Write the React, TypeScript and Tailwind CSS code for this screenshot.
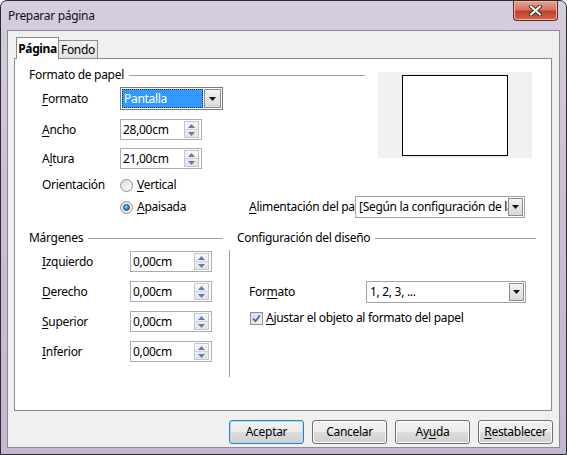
import React from 'react';

const U = ({ children }: { children: React.ReactNode }) => (
  <span className="underline decoration-1 underline-offset-[2px]">{children}</span>
);

function Spin() {
  return (
    <div className="mr-[2px] flex h-[17px] w-[15px] flex-col border border-[#c6c6c6] bg-gradient-to-b from-[#f7f7f7] to-[#e3e3e3]">
      <div className="flex flex-1 items-center justify-center border-b border-[#d2d2d2]">
        <svg width="7" height="4" viewBox="0 0 7 4">
          <path d="M0 4L3.5 0L7 4Z" fill="#5b7db8" />
        </svg>
      </div>
      <div className="flex flex-1 items-center justify-center">
        <svg width="7" height="4" viewBox="0 0 7 4">
          <path d="M0 0L3.5 4L7 0Z" fill="#5b7db8" />
        </svg>
      </div>
    </div>
  );
}

function SpinBox({ value, className }: { value: string; className: string }) {
  return (
    <div className={`flex h-[21px] items-center border border-[#abadb3] bg-white pl-[2px] ${className}`}>
      <span className="flex-1 whitespace-nowrap">{value}</span>
      <Spin />
    </div>
  );
}

function Arrow({ className }: { className: string }) {
  return (
    <div
      className={`flex shrink-0 items-center justify-center border border-[#8d8d8d] bg-gradient-to-b from-[#f4f4f4] to-[#d9d9d9] ${className}`}
    >
      <svg width="7" height="4" viewBox="0 0 7 4">
        <path d="M0 0H7L3.5 4Z" fill="#111" />
      </svg>
    </div>
  );
}

function Combo({ value, className }: { value: string; className: string }) {
  return (
    <div className={`flex h-[22px] items-center border border-[#a3a3a3] bg-white p-[1px] ${className}`}>
      <span className="flex-1 overflow-hidden whitespace-nowrap pl-[2px]">{value}</span>
      <Arrow className="h-[18px] w-[15px]" />
    </div>
  );
}

function Heading({ text }: { text: string }) {
  return (
    <div className="flex h-[16px] items-center">
      <span className="whitespace-nowrap pr-[5px]">{text}</span>
      <div className="h-px flex-1 bg-[#a0a0a0]" />
    </div>
  );
}

function Radio({ checked }: { checked?: boolean }) {
  return (
    <div className="flex h-[13px] w-[13px] items-center justify-center rounded-full border border-[#8e8f8f] bg-gradient-to-br from-[#dcdcdc] to-[#fbfbfb]">
      {checked && (
        <div className="h-[7px] w-[7px] rounded-full border border-[#1b4f84] bg-[radial-gradient(circle_at_40%_35%,#8fd3ff_0%,#2b83c8_55%,#135a9a_100%)]" />
      )}
    </div>
  );
}

function Btn({ children, def }: { children: React.ReactNode; def?: boolean }) {
  return (
    <div
      className={`flex h-[24px] w-[75px] items-center justify-center rounded-[3px] border bg-[linear-gradient(180deg,#f3f3f3_0%,#ebebeb_48%,#dddddd_52%,#cfcfcf_100%)] ${
        def
          ? 'border-[#3c7fb1] shadow-[inset_0_0_0_1px_#a9dcf6]'
          : 'border-[#707070] shadow-[inset_0_0_0_1px_#fbfbfb]'
      }`}
    >
      {children}
    </div>
  );
}

function MarginRow({ label, first }: { label: React.ReactNode; first?: boolean }) {
  return (
    <div className={`flex items-center ${first ? 'mt-[5px]' : 'mt-[9px]'}`}>
      <div className="ml-[13px] w-[88px]">{label}</div>
      <SpinBox value="0,00cm" className="w-[82px]" />
    </div>
  );
}

export default function App() {
  return (
    <div className="flex h-[455px] w-[567px] flex-col rounded-t-[7px] border border-[#2b2b2b] bg-[linear-gradient(180deg,#d6cde0_0%,#cbbfd6_40%,#c5b6d1_100%)] font-['Noto_Sans',sans-serif] text-[12px] leading-[16px] tracking-[-0.3px] text-black">
      {/* title bar */}
      <div className="flex h-[29px] shrink-0 items-start justify-between">
        <div className="pl-[7px] pt-[7px] text-[#111]">Preparar página</div>
        <div className="mr-[8px] flex h-[20px] w-[45px] items-center justify-center rounded-b-[4px] border border-t-0 border-[#5b2a26] bg-[linear-gradient(180deg,#e7a497_0%,#d6735f_45%,#c1402a_55%,#d0664a_100%)] shadow-[inset_0_0_0_1px_#f0b8aa]">
          <svg width="13" height="11" viewBox="0 0 13 11">
            <path d="M2 1.5L11 9.5M11 1.5L2 9.5" stroke="#3b2a2a" strokeWidth="4" strokeLinecap="round" />
            <path d="M2 1.5L11 9.5M11 1.5L2 9.5" stroke="#fff" strokeWidth="2.2" strokeLinecap="round" />
          </svg>
        </div>
      </div>

      {/* client area */}
      <div className="mx-[6px] mb-[6px] flex flex-1 flex-col border border-[#8e8a96] bg-[#f0f0f0]">
        {/* tabs */}
        <div className="ml-[8px] mt-[6px] flex items-end">
          <div className="relative z-10 -mb-px flex h-[22px] w-[43px] items-center justify-center border border-b-0 border-[#898c95] bg-white font-bold tracking-[-0.4px]">
            Página
          </div>
          <div className="-ml-px flex h-[18px] w-[40px] items-center justify-center border border-b-0 border-[#898c95] bg-gradient-to-b from-[#f0f0f0] to-[#e2e2e2]">
            Fondo
          </div>
        </div>

        {/* tab page */}
        <div className="ml-[6px] flex h-[353px] w-[538px] flex-col border border-[#898c95] bg-white">
          <div className="flex pt-[8px]">
            <div className="ml-[14px] flex w-[336px] flex-col">
              <Heading text="Formato de papel" />
              <div className="mt-[4px] flex items-center">
                <div className="ml-[13px] w-[78px]">
                  <U>F</U>ormato
                </div>
                <div className="flex h-[23px] w-[103px] items-center border border-[#7a7a7a] bg-white p-[1px]">
                  <div className="flex h-full flex-1 items-center border border-dotted border-[#0d2b57] bg-[#3399ff] pl-[1px] text-white">
                    Pantalla
                  </div>
                  <Arrow className="ml-[1px] h-full w-[17px]" />
                </div>
              </div>
              <div className="mt-[9px] flex items-center">
                <div className="ml-[13px] w-[78px]">
                  <U>A</U>ncho
                </div>
                <SpinBox value="28,00cm" className="w-[82px]" />
              </div>
              <div className="mt-[8px] flex items-center">
                <div className="ml-[13px] w-[78px]">
                  A<U>l</U>tura
                </div>
                <SpinBox value="21,00cm" className="w-[82px]" />
              </div>
              <div className="mt-[8px] flex h-[16px] items-center">
                <div className="ml-[13px] w-[78px]">Orientación</div>
                <Radio />
                <span className="ml-[4px]">
                  <U>V</U>ertical
                </span>
              </div>
            </div>
            <div className="ml-[13px] mt-[5px] flex h-[86px] w-[154px] justify-center bg-[#f0f0f0] pt-[3px]">
              <div className="h-[81px] w-[106px] border border-black bg-white" />
            </div>
          </div>

          <div className="mt-[3px] flex h-[22px] items-center pl-[14px]">
            <div className="ml-[13px] w-[78px]" />
            <div className="flex w-[129px] items-center">
              <Radio checked />
              <span className="ml-[4px]">
                <U>A</U>paisada
              </span>
            </div>
            <div className="w-[106px] overflow-hidden whitespace-nowrap">
              <U>A</U>limentación del papel
            </div>
            <Combo value="[Según la configuración de la impresora]" className="w-[170px]" />
          </div>

          {/* lower sections */}
          <div className="mt-[12px] flex">
            <div className="ml-[14px] flex w-[194px] flex-col">
              <Heading text="Márgenes" />
              <MarginRow first label={<><U>I</U>zquierdo</>} />
              <MarginRow label={<><U>D</U>erecho</>} />
              <MarginRow label={<><U>S</U>uperior</>} />
              <MarginRow label={<><U>I</U>nferior</>} />
            </div>
            <div className="ml-[6px] mt-[20px] h-[127px] w-px bg-[#a0a0a0]" />
            <div className="ml-[7px] flex w-[299px] flex-col">
              <Heading text="Configuración del diseño" />
              <div className="mt-[35px] flex items-center">
                <div className="ml-[12px] w-[117px]">
                  For<U>m</U>ato
                </div>
                <Combo value="1, 2, 3, ..." className="w-[160px]" />
              </div>
              <div className="ml-[13px] mt-[7px] flex items-center">
                <div className="flex h-[13px] w-[13px] items-center justify-center border border-[#8e8f8f] bg-gradient-to-br from-[#d2dae6] to-[#f4f6f9]">
                  <svg width="9" height="9" viewBox="0 0 9 9">
                    <path d="M1 4.5L3.5 7.2L8 1.2" fill="none" stroke="#4a64a0" strokeWidth="1.8" />
                  </svg>
                </div>
                <span className="ml-[3px]">
                  <U>A</U>justar el objeto al formato del papel
                </span>
              </div>
            </div>
          </div>
        </div>

        {/* buttons */}
        <div className="mr-[6px] mt-[9px] flex justify-end gap-[8px]">
          <Btn def>Aceptar</Btn>
          <Btn>Cancelar</Btn>
          <Btn>
            Ay<U>u</U>da
          </Btn>
          <Btn>
            <U>R</U>establecer
          </Btn>
        </div>
      </div>
    </div>
  );
}
